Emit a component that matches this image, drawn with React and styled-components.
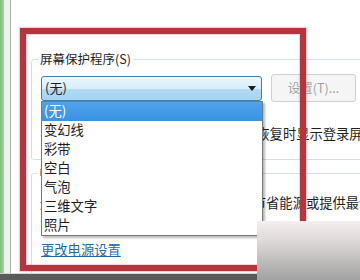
import React from "react";
import styled, { createGlobalStyle } from "styled-components";

const GlobalStyle = createGlobalStyle`
  html, body {
    margin: 0;
    padding: 0;
    background: #fff;
  }
  body {
    width: 360px;
    height: 280px;
    overflow: hidden;
    font-family: "Noto Sans CJK SC", "Liberation Sans", sans-serif;
    color: #1e1e1e;
  }
`;

const savers = ["(无)", "变幻线", "彩带", "空白", "气泡", "三维文字", "照片"];

const Screen = styled.div`
  position: relative;
  width: 360px;
  height: 280px;
  overflow: hidden;
  display: flex;
  flex-direction: column;
  background: #fff;
`;

const Main = styled.div`
  flex: 1;
  display: flex;
  min-height: 0;
`;

const GreenEdge = styled.div`
  width: 4px;
  background: linear-gradient(to right, #7fb87f, #a8d4a8);
`;

const Gutter = styled.div`
  width: 6px;
  background: #eef0ee;
  border-right: 1px solid #a9aca9;
`;

const Content = styled.div`
  flex: 1;
  min-width: 0;
  overflow: hidden;
  padding: 52px 0 0 20px;
  font-size: 12.5px;
  line-height: 14px;
`;

const Group = styled.fieldset`
  box-sizing: border-box;
  width: 380px;
  margin: ${p => p.$gap || 0}px 0 0 0;
  padding: ${p => p.$top}px 0 ${p => p.$bottom}px 9px;
  border: 1px solid #d5dfe5;
  border-radius: 3px;
  min-width: 0;
`;

const Legend = styled.legend`
  padding: 0 2px;
  margin-left: ${p => p.$shift}px;
  line-height: 14px;
  color: #1e1e1e;
`;

const ComboRow = styled.div`
  display: flex;
  align-items: center;
  gap: 9px;
  height: 28px;
`;

const ComboWrap = styled.div`
  position: relative;
  width: 221px;
  height: 25px;
`;

const Combo = styled.div`
  box-sizing: border-box;
  height: 25px;
  display: flex;
  align-items: center;
  justify-content: space-between;
  padding: 0 5px 0 3px;
  border: 1px solid #3c7fb1;
  border-radius: 3px;
  font-size: 13px;
  background: linear-gradient(to bottom, #edf7fd 0%, #d7eefb 50%, #b3dcf4 52%, #a4d3f0 100%);
`;

const DropList = styled.ul`
  position: absolute;
  top: 100%;
  left: 0;
  box-sizing: border-box;
  width: 222px;
  height: 135px;
  margin: 0;
  padding: 0;
  list-style: none;
  background: #fff;
  border: 1px solid #7a7a7a;
  box-shadow: 2px 2px 2px rgba(0, 0, 0, 0.28);
  z-index: 2;
`;

const Item = styled.li`
  height: 19px;
  display: flex;
  align-items: center;
  padding-left: 2px;
  font-size: 13.3px;
  color: ${p => (p.$active ? "#fff" : "#1e1e1e")};
  background: ${p => (p.$active ? "linear-gradient(#4ea3ec, #3a92e0)" : "transparent")};
`;

const SetButton = styled.div`
  box-sizing: border-box;
  width: 85px;
  height: 28px;
  display: flex;
  align-items: center;
  justify-content: center;
  border: 1px solid #d0d0d0;
  border-radius: 3px;
  background: #f5f5f5;
  color: #a3a3a3;
`;

const CheckRow = styled.div`
  display: flex;
  align-items: center;
  gap: 4px;
  height: 16px;
  margin-top: 24px;
  padding-left: 185px;
  white-space: nowrap;
  font-size: 13.3px;
`;

const CheckBox = styled.span`
  box-sizing: border-box;
  flex: none;
  width: 13px;
  height: 13px;
  border: 1px solid #8f8f8f;
  background: #f4f4f4;
`;

const PowerText = styled.div`
  white-space: nowrap;
  font-size: 13.3px;
  text-indent: ${p => p.$indent}px;
`;

const PowerLink = styled.a`
  display: inline-block;
  margin-top: 33px;
  font-size: 13.3px;
  color: #1f6aa5;
  text-decoration: underline;
`;

const BottomBar = styled.div`
  height: 6px;
  background: #5a5a5a;
  border-top: 1px solid #d4d4d4;
`;

const Highlight = styled.div`
  position: absolute;
  left: 20px;
  top: 28px;
  width: 286px;
  height: 243px;
  box-sizing: border-box;
  border: 6px solid #b6343d;
  box-shadow: 0 0 1px 1px rgba(220, 120, 130, 0.35), inset 0 0 1px 1px rgba(220, 120, 130, 0.35);
  z-index: 3;
  pointer-events: none;
`;

const Watermark = styled.div`
  position: absolute;
  left: 257px;
  top: 221px;
  right: 0;
  bottom: 0;
  background: linear-gradient(to bottom, #f4eeee 0%, #ddd8d8 35%, #bdbaba 70%, #a2a2a2 100%);
  z-index: 4;
`;

const Arrow = () => (
  <svg width="8" height="5" viewBox="0 0 8 5">
    <path d="M0 0 H8 L4 5 Z" fill="#1a1a1a" />
  </svg>
);

export default function App() {
  return (
    <Screen>
      <GlobalStyle />
      <Main>
        <GreenEdge />
        <Gutter />
        <Content>
          <Group $top={8} $bottom={17}>
            <Legend $shift={-3}>屏幕保护程序(S)</Legend>
            <ComboRow>
              <ComboWrap>
                <Combo>
                  <span>(无)</span>
                  <Arrow />
                </Combo>
                <DropList>
                  {savers.map((name, i) => (
                    <Item key={name} $active={i === 0}>{name}</Item>
                  ))}
                </DropList>
              </ComboWrap>
              <SetButton>设置(T)...</SetButton>
            </ComboRow>
            <CheckRow>
              <CheckBox />
              <span>在恢复时显示登录屏幕(R)</span>
            </CheckRow>
          </Group>
          <Group $gap={6} $top={16} $bottom={30}>
            <Legend $shift={-4}>电源管理</Legend>
            <PowerText $indent={-1}>通过调整显示亮度和其他电源设置以节省能源或提供最佳性能。</PowerText>
            <PowerLink>更改电源设置</PowerLink>
          </Group>
        </Content>
      </Main>
      <BottomBar />
      <Highlight />
      <Watermark />
    </Screen>
  );
}
